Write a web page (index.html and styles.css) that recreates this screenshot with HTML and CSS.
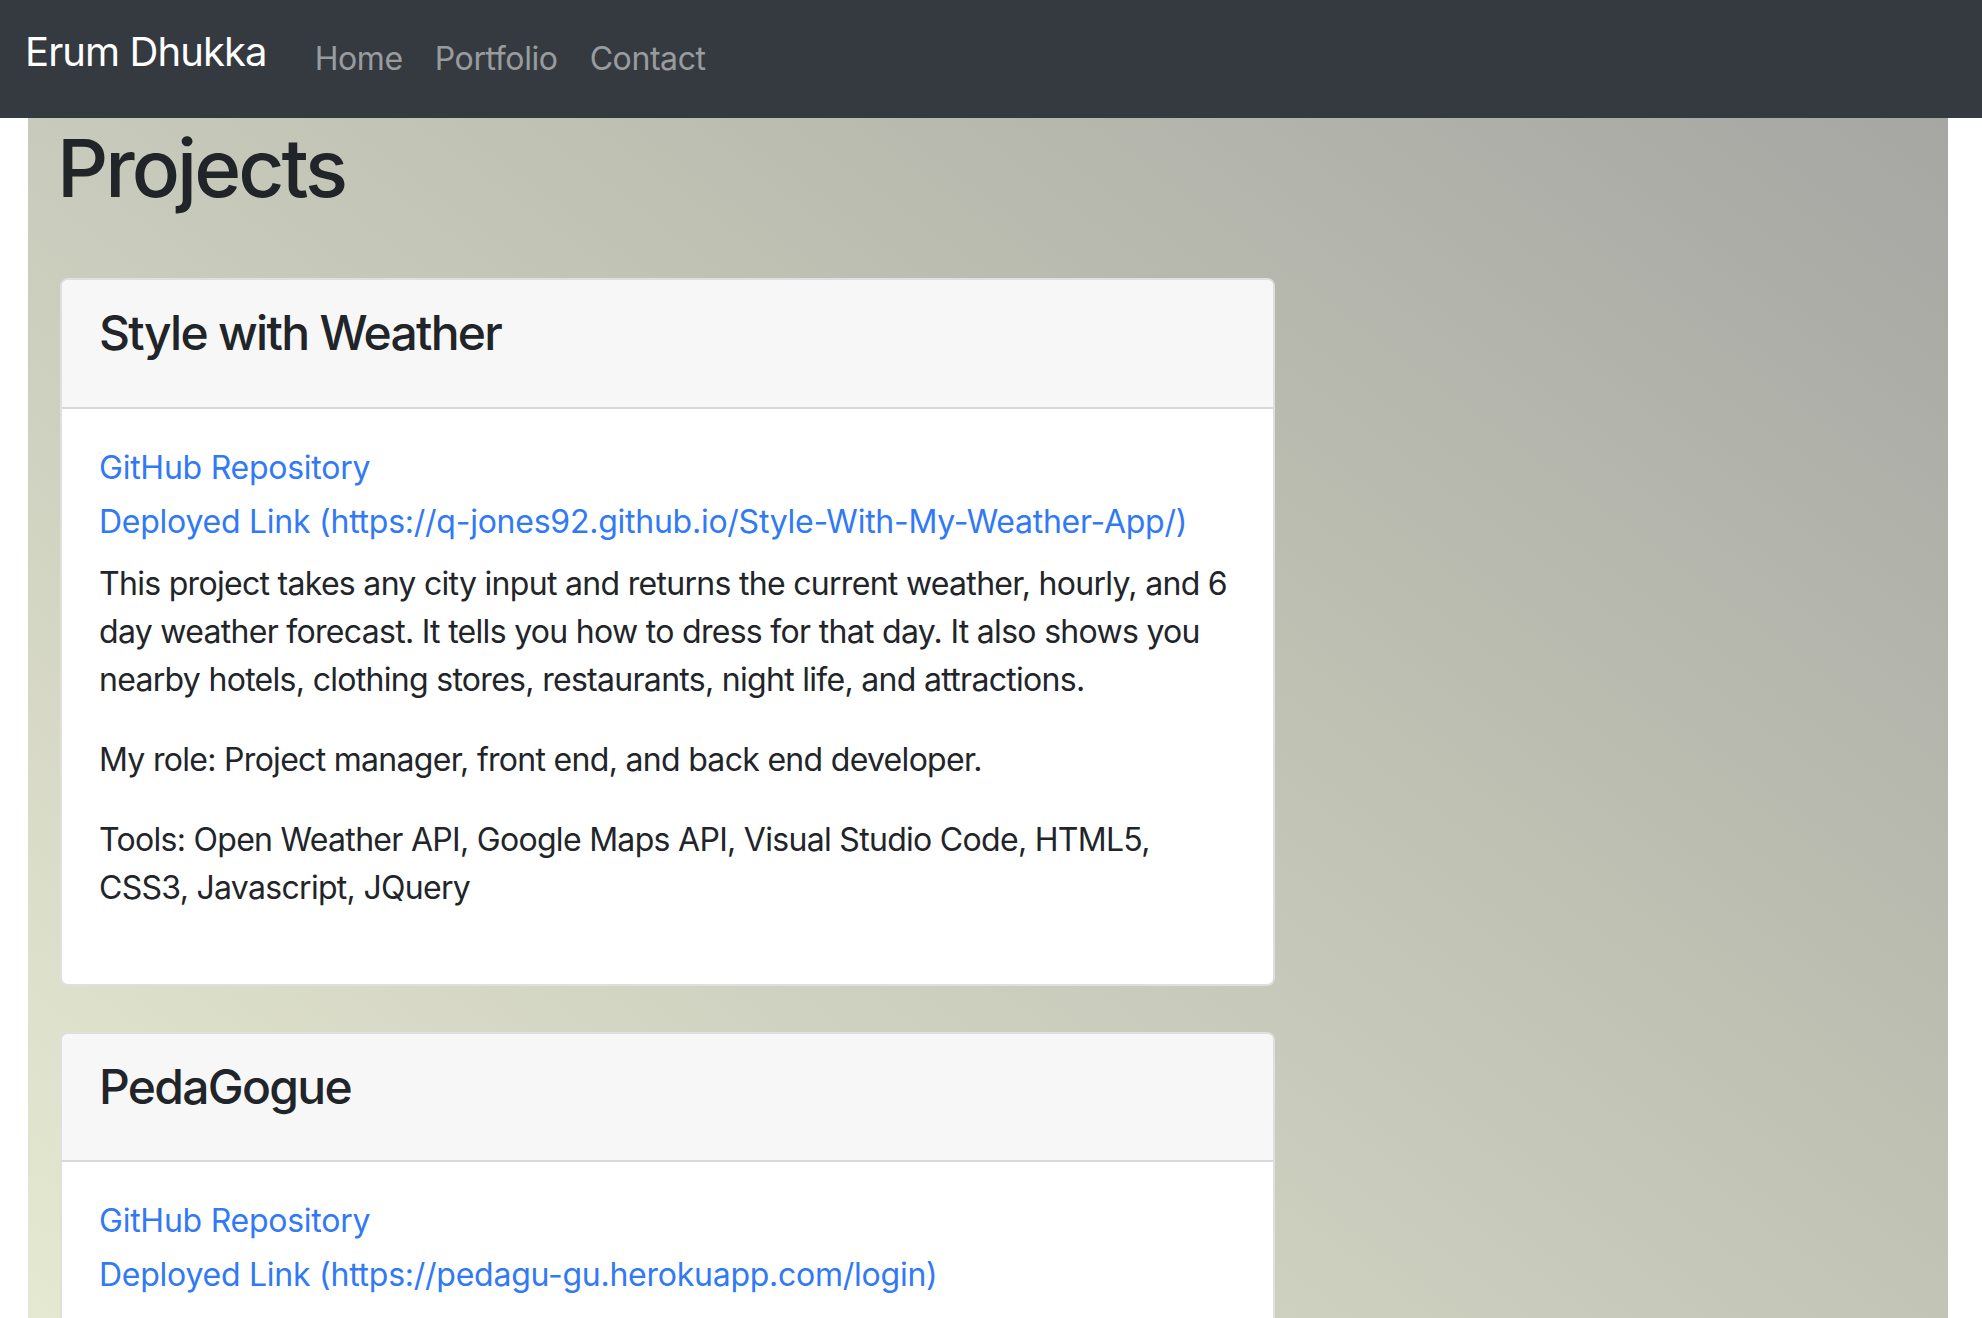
FILE: index.html
```html
<!DOCTYPE html>
<html lang="en">
<head>
<meta charset="utf-8">
<title>Erum Dhukka - Portfolio</title>
<link rel="stylesheet" href="styles.css">
</head>
<body>
<nav class="navbar">
  <a class="brand" href="#">Erum Dhukka</a>
  <ul class="nav">
    <li><a class="nav-link" href="#">Home</a></li>
    <li><a class="nav-link" href="#">Portfolio</a></li>
    <li><a class="nav-link" href="#">Contact</a></li>
  </ul>
</nav>
<main class="page">
  <h1 class="page-title">Projects</h1>
  <section class="card">
    <div class="card-header">
      <h4 class="card-title">Style with Weather</h4>
    </div>
    <div class="card-body">
      <a class="card-link" href="#">GitHub Repository</a>
      <a class="card-link" href="#">Deployed Link (https://q-jones92.github.io/Style-With-My-Weather-App/)</a>
      <p class="card-text first">This project takes any city input and returns the current weather, hourly, and 6 day weather forecast. It tells you how to dress for that day. It also shows you nearby hotels, clothing stores, restaurants, night life, and attractions.</p>
      <p class="card-text">My role: Project manager, front end, and back end developer.</p>
      <p class="card-text">Tools: Open Weather API, Google Maps API, Visual Studio Code, HTML5, CSS3, Javascript, JQuery</p>
    </div>
  </section>
  <section class="card">
    <div class="card-header">
      <h4 class="card-title">PedaGogue</h4>
    </div>
    <div class="card-body">
      <a class="card-link" href="#">GitHub Repository</a>
      <a class="card-link" href="#">Deployed Link (https://pedagu-gu.herokuapp.com/login)</a>
      <p class="card-text first">A learning platform that connects students and teachers.</p>
      <p class="card-text">My role: Full stack developer.</p>
    </div>
  </section>
</main>
</body>
</html>
```
FILE: styles.css
```css
* { box-sizing: border-box; }

html, body {
  margin: 0;
  padding: 0;
}

body {
  font-family: Inter, "Noto Sans", "Liberation Sans", sans-serif;
  font-size: 32px;
  line-height: 1.5;
  color: #212529;
  background: #ffffff;
}

a { text-decoration: none; }

.navbar {
  display: flex;
  align-items: flex-start;
  height: 118px;
  padding: 22px 24px 0 25px;
  background: #343a40;
}

.brand {
  color: #ffffff;
  font-size: 40px;
  line-height: 60px;
  letter-spacing: -0.9px;
  margin-right: 32px;
  white-space: nowrap;
}

.nav {
  display: flex;
  list-style: none;
  margin: 0;
  padding: 13px 0 0;
}

.nav-link {
  display: block;
  padding: 0 16px;
  line-height: 48px;
  letter-spacing: -0.4px;
  color: rgba(255, 255, 255, 0.5);
}

.page {
  margin: 0 34px 0 28px;
  padding: 2px 32px 40px 30px;
  background: linear-gradient(37deg, #e6e9d1 0%, #c8cabb 45%, #bfc1b3 60%, #a6a6a3 100%) top left / 100% 1200px no-repeat, #e6e9d1;
  min-height: 1200px;
}

.page-title {
  margin: 0 0 62px -1px;
  font-size: 80px;
  font-weight: 500;
  line-height: 1.2;
  letter-spacing: -3px;
}

.card {
  width: 1215px;
  margin: 0 0 46px 2px;
  background: #ffffff;
  border: 2px solid rgba(0, 0, 0, 0.125);
  border-radius: 8px;
  overflow: hidden;
}

.card-header {
  padding: 24px 37px 24px;
  background: #f7f7f7;
  border-bottom: 2px solid rgba(0, 0, 0, 0.125);
}

.card-title {
  margin: 0 0 21px;
  font-size: 48px;
  font-weight: 500;
  line-height: 1.2;
  letter-spacing: -1.7px;
}

.card-body {
  padding: 32px 36px 40px 37px;
}

.card-link {
  display: block;
  line-height: 54px;
  letter-spacing: -0.25px;
  color: #3179f5;
}

.card-text {
  margin: 0 0 32px;
  letter-spacing: -0.7px;
}

.card-text.first {
  margin-top: 11px;
}
```
